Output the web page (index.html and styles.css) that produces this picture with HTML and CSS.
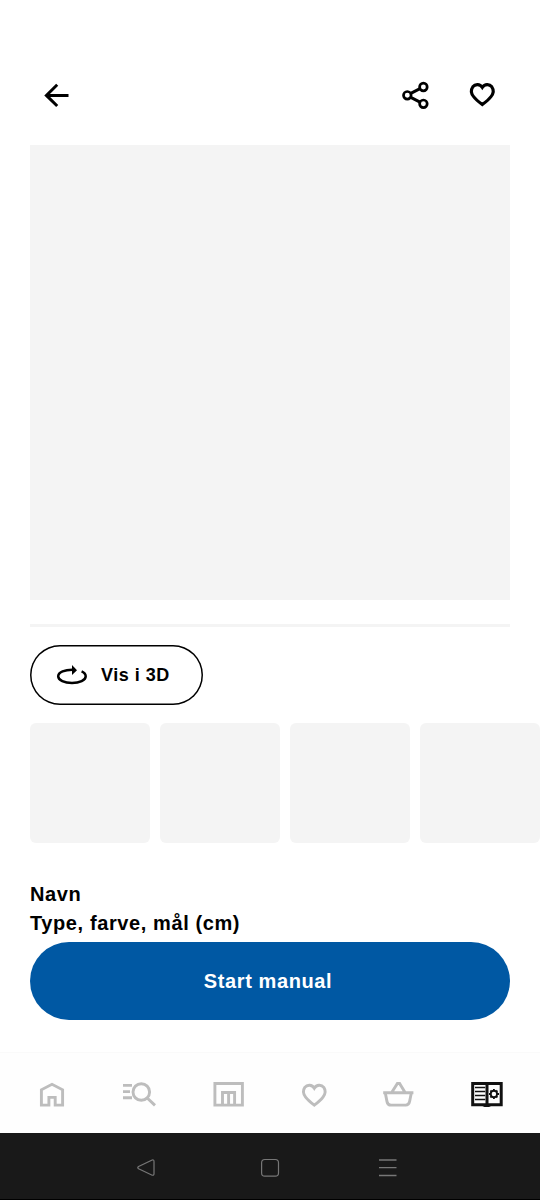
FILE: index.html
```html
<!DOCTYPE html>
<html lang="da">
<head>
<meta charset="utf-8">
<title>Produkt</title>
<link rel="stylesheet" href="styles.css">
</head>
<body>
<div class="screen">
  <header class="topbar">
    <svg class="icon" width="30" height="30" viewBox="42 80 30 30"><path d="M68.5 95.4H47M57.2 84.8L46.4 95.4L57.2 106" stroke-width="3"/></svg>
    <div class="actions">
      <svg class="icon" width="30" height="30" viewBox="401 80 30 30" stroke-width="2.7"><circle cx="407.3" cy="95.3" r="3.8"/><circle cx="423.4" cy="87" r="3.8"/><circle cx="423.4" cy="103.8" r="3.8"/><path d="M410.8 93.4L420 88.7M410.8 97.3L420 102.1" stroke-width="3"/></svg>
      <svg class="icon" width="30" height="30" viewBox="467 80 30 30"><path d="M482.3 87.4C479.9 83.8 475.2 83.7 472.8 86.8C470.8 89.7 471.2 93.6 473.6 96.6C475.8 99.5 478.8 101.9 482.3 104.6C485.8 101.9 488.8 99.5 491 96.6C493.4 93.6 493.8 89.7 491.8 86.8C489.4 83.7 484.7 83.8 482.3 87.4Z" stroke-width="3.1"/></svg>
    </div>
  </header>
  <main class="content">
    <div class="hero"></div>
    <div class="rule"></div>
    <button class="view3d">
      <svg width="32" height="22" viewBox="56 664 32 22"><path d="M73.5 669.7C64.8 669.4 58.2 672.2 58.2 676.2C58.2 680.3 64.5 683.1 72 683.1C79.5 683.1 85.7 680.4 85.7 676.3C85.7 674.3 84.2 672.5 81.6 671.4" fill="none" stroke="#000" stroke-width="2.5"/><path d="M72 665L77 670.2L72 675Z"/></svg>
      <span>Vis i 3D</span>
    </button>
    <div class="thumbs"><div class="thumb"></div><div class="thumb"></div><div class="thumb"></div><div class="thumb"></div></div>
    <div class="name">Navn</div>
    <div class="name">Type, farve, mål (cm)</div>
    <button class="start">Start manual</button>
  </main>
  <nav class="tabs">
    <svg class="tab" width="28" height="30" viewBox="38 1080 28 30"><path d="M41.4 1105.1V1089.8L52 1084.3L62.6 1089.8V1105.1H55.2V1097.4H48.9V1105.1Z"/></svg>
    <svg class="tab" width="36" height="30" viewBox="121 1080 36 30"><circle cx="141.3" cy="1092" r="8.3"/><path d="M147.2 1098L155 1105.4M123 1085.4H132M123 1091.6H130M123 1097.7H132"/></svg>
    <svg class="tab" width="34" height="30" viewBox="212 1080 34 30"><path d="M214.9 1083.5H242.4V1105.1H214.9ZM222.5 1105V1092.5H234.6V1105M228.6 1092.5V1105"/></svg>
    <svg class="tab saved" width="30" height="30" viewBox="299 1080 30 30"><path d="M314.3 1088.2C312 1084.5 307.2 1084.4 304.8 1087.4C302.9 1090.2 303.2 1094 305.6 1097.1C307.8 1100 310.9 1102.6 314.3 1105.2C317.7 1102.6 320.8 1100 323 1097.1C325.4 1094 325.7 1090.2 323.8 1087.4C321.4 1084.4 316.6 1084.5 314.3 1088.2Z"/></svg>
    <svg class="tab basket" width="34" height="30" viewBox="381 1080 34 30"><path d="M383.2 1092.8H413.4M385.3 1093L387 1101.6C387.5 1104.2 388.7 1105.1 391 1105.1H405.6C407.9 1105.1 409.1 1104.2 409.6 1101.6L411.3 1093M392 1092L397.4 1083.5H399.6L404.8 1092"/></svg>
    <svg class="tab active" width="34" height="30" viewBox="470 1080 34 30"><path d="M472.7 1083.5H501.2V1104.8H472.7ZM487 1083V1106" stroke-width="3"/><path d="M482.5 1104H491V1106L489 1107H484.5L482.5 1106Z" fill="#111" stroke="none"/><path d="M475 1087.5H485.2M475 1091.5H485.2M475 1095.5H485.2M475 1099.5H485.2" stroke-width="1.7"/><circle cx="493.9" cy="1094" r="3.2" stroke-width="1.9"/><path d="M493.9 1089V1091M493.9 1097V1099M489 1094H491M497 1094H499M490.4 1090.5L491.7 1091.8M496.1 1096.2L497.4 1097.5M490.4 1097.5L491.7 1096.2M496.1 1091.8L497.4 1090.5" stroke-width="1.8"/></svg>
  </nav>
  <footer class="system">
    <svg width="20" height="20" viewBox="136 1158 20 20"><path d="M152.2 1160L138.6 1166.4Q136.9 1167.6 138.6 1168.8L152.2 1175.2Q154 1175.6 154 1173.8V1161.4Q154 1159.6 152.2 1160Z"/></svg>
    <svg class="home" width="20" height="20" viewBox="260 1158 20 20"><rect x="261.6" y="1159.5" width="16.9" height="16.7" rx="3.2"/></svg>
    <svg class="menu" width="20" height="20" viewBox="378 1158 20 20"><path d="M379 1160H396.5M379 1167.6H396.5M379 1175.5H396.5" stroke-width="1.4"/></svg>
  </footer>
</div>
</body>
</html>
```
FILE: styles.css
```css
* { box-sizing: border-box; }
body { margin: 0; background: #fff; color: #000; font-family: "Liberation Sans", Arial, sans-serif; }
.screen { width: 540px; height: 1200px; overflow: hidden; display: flex; flex-direction: column; }
svg { display: block; flex: none; }
button { font: inherit; color: inherit; margin: 0; cursor: pointer; }
.topbar { height: 145px; padding: 80px 43px 0 42px; display: flex; justify-content: space-between; }
.actions { display: flex; gap: 36px; }
.icon { fill: none; stroke: #000; }
.content { height: 907px; padding: 0 30px; }
.hero { height: 455px; background: #f4f4f4; }
.rule { height: 3px; margin: 24px 0 18px; background: #f4f4f4; }
.view3d { display: flex; align-items: center; gap: 13px; width: 172.5px; height: 60px; padding: 0 0 0 26px; border: 0; border-radius: 30px; box-shadow: inset 0 0 0 1.5px #000; background: #fff; font-size: 18px; font-weight: 700; letter-spacing: .5px; white-space: nowrap; }
.thumbs { display: flex; gap: 10px; margin: 18px -30px 37px 0; }
.thumb { width: 120px; height: 120px; flex: none; border-radius: 6px; background: #f4f4f4; }
.name { height: 29px; line-height: 29px; font-size: 20px; font-weight: 700; letter-spacing: .6px; }
.start { display: block; width: 100%; height: 78px; margin-top: 4px; padding: 0 4px 0 0; border: 0; border-radius: 39px; background: #0058a3; color: #fff; font-size: 20px; font-weight: 700; letter-spacing: .6px; }
.tabs { height: 81px; padding: 27px 0 0 38px; border-top: 1px solid #fafafa; background: #fefefe; display: flex; gap: 55px; }
.tab { fill: none; stroke: #bdbdbd; stroke-width: 2.9; }
.tab.saved { margin-left: -2px; }
.tab.basket { margin-left: -3px; }
.tab.active { stroke: #111; }
.system { height: 67px; padding: 25px 0 0 136px; background: #191919; border-bottom: 1px solid #000; display: flex; }
.system svg { fill: none; stroke: #777; stroke-width: 1.2; }
.system .home { margin-left: 104px; }
.system .menu { margin-left: 98px; }
```
